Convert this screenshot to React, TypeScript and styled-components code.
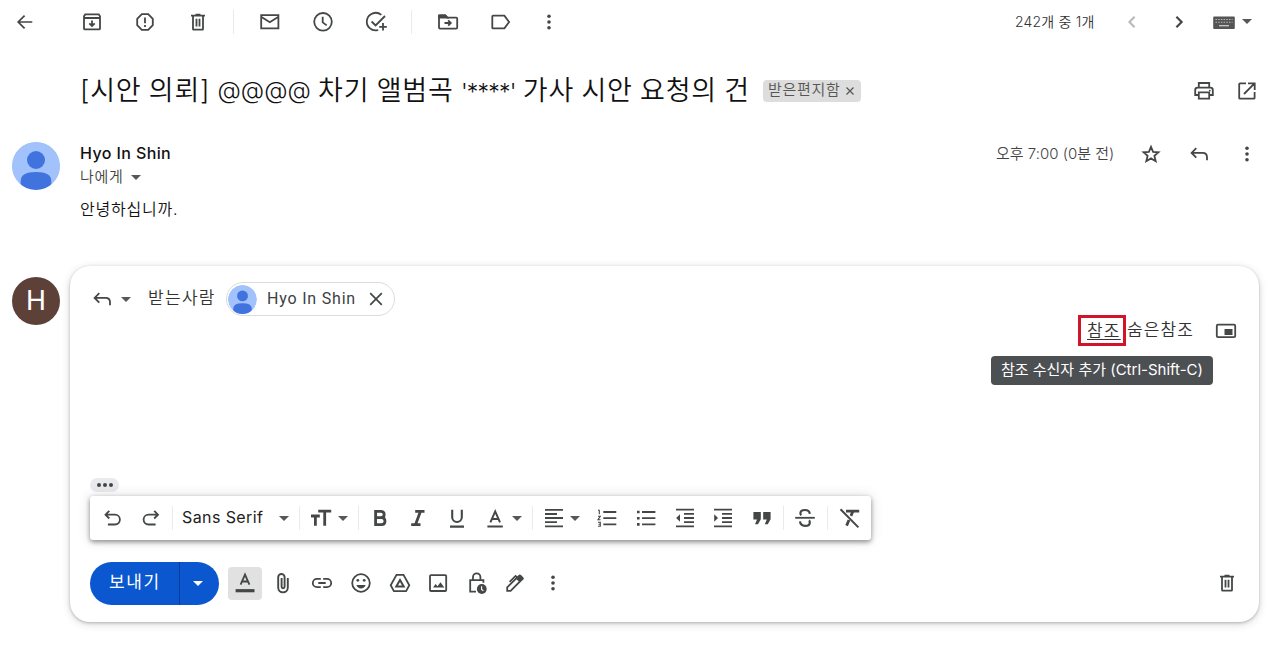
import React from "react";
import styled, { createGlobalStyle } from "styled-components";

const GlobalStyle = createGlobalStyle`
  * {
    box-sizing: border-box;
  }

  body {
    margin: 0;
    background: #fff;
    color: #202124;
    font-family: Inter, "Noto Sans CJK KR", sans-serif;
    overflow: hidden;
  }
`;

const icons = {
  back: <path d="M19.3 12H5.5M11.6 5.6 5.2 12l6.4 6.4" strokeWidth="1.7" />,
  archive: (
    <>
      <path d="M5.2 4.4h13.6L20 6.2v12.2q0 1-1 1H5q-1 0-1-1V6.2zM4 8h16" />
      <path d="M12 10.5v5M9.3 13.3l2.7 2.7 2.7-2.7" />
    </>
  ),
  report: (
    <>
      <path d="M8.8 4.2h6.4l4.6 4.6v6.4l-4.6 4.6H8.8l-4.6-4.6V8.8z" />
      <path d="M12 7.6v5.6M12 14.9v2" />
    </>
  ),
  trash: (
    <path d="M5 5.6h14M9.5 4.6h5M7 6v13.1q0 .6.6.6h8.8q.6 0 .6-.6V6M10.5 8.8v7.6M13.5 8.8v7.6" />
  ),
  mail: <path d="M3.2 5.2h17.2v13.2H3.2zM3.5 7.1l8.3 5.2 8.3-5.2" />,
  clock: (
    <>
      <circle cx="12" cy="11.8" r="8.8" />
      <path d="M11.7 6.8v5.6l4 3" />
    </>
  ),
  addTask: (
    <path d="M17.3 4.9A8.8 8.8 0 1 0 14.2 20M7.6 11.5l4 4L21 6M19 13v7.6M15.2 16.8h7.6" />
  ),
  moveTo: (
    <>
      <path d="M3 6.4q0-1 1-1h5.3l2 2.2h8.9q1 0 1 1v9q0 1-1 1H4q-1 0-1-1z" />
      <path
        d="M3 5.4h6.3l2 2.2H3z"
        fill="currentColor"
      />
      <path d="M8.5 13h6M12.2 10.4l2.6 2.6-2.6 2.6" />
    </>
  ),
  label: <path d="M4 5.6h11.4l4.7 6.4-4.7 6.4H4q-.7 0-.7-.7V6.3q0-.7.7-.7z" />,
  more: (
    <g fill="currentColor" stroke="none">
      <circle cx="12" cy="6.2" r="1.8" />
      <circle cx="12" cy="12" r="1.8" />
      <circle cx="12" cy="17.8" r="1.8" />
    </g>
  ),
  chevronLeft: <path d="m14.6 6.8-5.2 5.2 5.2 5.2" strokeWidth="2" />,
  chevronRight: <path d="m9.4 6.8 5.2 5.2-5.2 5.2" strokeWidth="2.2" />,
  keyboard: (
    <>
      <rect x="1.2" y="6.5" width="21.6" height="12.5" rx="1" fill="#555" stroke="none" />
      <path
        d="M3.5 9.5h17M3.5 12.3h17"
        stroke="#bbb"
        strokeWidth="1.1"
        strokeDasharray="1.5 1.2"
      />
      <path d="M7 15.7h10" stroke="#ccc" strokeWidth="1.3" />
    </>
  ),
  print: (
    <>
      <path d="M6.8 8V4h10.4v4M6.8 16H3.2v-5q0-2.4 2.4-2.4h12.8q2.4 0 2.4 2.4v5h-3.6" />
      <path d="M6.8 13.4h10.4v6.2H6.8z" />
      <circle cx="17.8" cy="11.6" r=".9" fill="currentColor" stroke="none" />
    </>
  ),
  popOut: <path d="M11 4.3H5q-.8 0-.8.8v13.8q0 .8.8.8h13.8q.8 0 .8-.8V13M13 4.3h6.7V11M19.3 4.7 9 15" />,
  star: (
    <path d="m12 4.8 2.1 5 5.4.5-4.1 3.6 1.3 5.3-4.7-2.8-4.7 2.8 1.3-5.3-4.1-3.6 5.4-.5z" />
  ),
  reply: <path d="M9.3 6.2 4.6 10.9l4.7 4.7M4.8 10.9h10.8q4.4 0 4.4 4.4v3" />,
  close: <path d="m6.2 6.2 11.6 11.6M17.8 6.2 6.2 17.8" strokeWidth="1.7" />,
  closeSmall: <path d="m5 5 14 14M19 5 5 19" strokeWidth="2.4" />,
  pip: (
    <>
      <rect x="2.8" y="5.7" width="18.4" height="12.4" rx="1.2" />
      <path d="M10.5 10h8v6h-8z" fill="currentColor" stroke="none" />
    </>
  ),
  undo: <path d="M8.3 4.8 4.5 8.7l3.8 3.8M4.8 8.7H14a4.9 4.9 0 0 1 0 9.8H6.9" />,
  redo: <path d="m15.2 4.8 3.8 3.9-3.8 3.8M18.7 8.7H9.5a4.9 4.9 0 0 0 0 9.8h7.1" />,
  textSize: <path d="M9.2 5.2h13M15.7 5v14.8M2 10h8.8M6.4 10v9.8" strokeWidth="2.8" />,
  bold: (
    <path
      d="M7.6 5.3h5.2q3.4 0 3.4 3.2 0 3.2-3.4 3.2H7.6zM7.6 11.7h5.7q3.7 0 3.7 3.5t-3.7 3.5H7.6z"
      strokeWidth="2.8"
    />
  ),
  italic: <path d="M9.2 5.4h9.3M5.2 18.6h9.3M14.4 5.4 9.6 18.6" strokeWidth="2.8" />,
  underline: <path d="M7.2 3.8v7.4a4.8 4.8 0 0 0 9.6 0V3.8M5 20.6h14" strokeWidth="2.1" />,
  textColor: <path d="m7.4 16.4 4.8-11 4.8 11M9 13h6.4M4.4 20.4h15.4" strokeWidth="2" />,
  formatting: (
    <>
      <path d="m7.6 13.6 4.4-10 4.4 10M9.1 10.5h5.8" />
      <path d="M2.6 19.7h18.9" strokeWidth="3.2" />
    </>
  ),
  align: <path d="M3 3.9h18M3 8h12M3 12h18M3 16.1h12M3 20.3h18" />,
  ordered: (
    <>
      <path d="M8.3 6h13M8.3 12.2h13M8.3 18.4h13" />
      <path
        d="M3 4.2h1.3v4M3 10.3h2.3L3 13.7h2.5M3 16.3h2.3v4H3M3.5 18.3h1.8"
        strokeWidth="1.1"
      />
    </>
  ),
  bullets: (
    <>
      <path d="M8 6h13.4M8 12.2h13.4M8 18.4h13.4" />
      <path d="M3 6h2.6M3 12.2h2.6M3 18.4h2.6" strokeWidth="2.6" />
    </>
  ),
  outdent: (
    <>
      <path d="M3 3.6h18M11 7.8h10M11 12h10M11 16.2h10M3 20.4h18" />
      <path d="M7 8.2v7.6L3.2 12z" fill="currentColor" stroke="none" />
    </>
  ),
  indent: (
    <>
      <path d="M3 3.6h18M11 7.8h10M11 12h10M11 16.2h10M3 20.4h18" />
      <path d="M3.2 8.2v7.6L7 12z" fill="currentColor" stroke="none" />
    </>
  ),
  quote: (
    <path
      d="M3.4 6h7.4v7.2l-2.8 5H5l2-4.6H3.4zM13.2 6h7.4v7.2l-2.8 5h-3l2-4.6h-3.6z"
      fill="currentColor"
      stroke="none"
    />
  ),
  strike: (
    <>
      <path d="M16.8 7.8q-.4-3.8-4.8-3.8-4.6 0-4.6 3.2 0 1.2.9 2M7 15.4q.4 4.4 5.2 4.4 4.6 0 4.6-3.4 0-1.3-.8-2" strokeWidth="2.2" />
      <path d="M2.2 11.8h19.6" />
    </>
  ),
  clear: (
    <>
      <path d="M8 5.2h13.2M15 5.2l-2.1 4.7M11 14l-2.4 5.6" strokeWidth="2.8" />
      <path d="m2.5 3.2 17.9 18.2" strokeWidth="2" />
    </>
  ),
  attach: (
    <path
      d="M16.8 7v9.6a4.8 4.8 0 0 1-9.6 0V6.2a3.2 3.2 0 0 1 6.4 0v9.6a1.5 1.5 0 0 1-3 0V7"
      strokeWidth="1.9"
    />
  ),
  link: <path d="M10.8 7.8H7a4.2 4.2 0 0 0 0 8.4h3.8M13.2 7.8H17a4.2 4.2 0 0 1 0 8.4h-3.8M8.3 12h7.4" />,
  emoji: (
    <>
      <circle cx="12" cy="12" r="8.8" />
      <path d="M7.4 14h9.2q-1.2 3.4-4.6 3.4T7.4 14z" fill="currentColor" stroke="none" />
      <circle cx="8.8" cy="9.3" r="1.4" fill="currentColor" stroke="none" />
      <circle cx="15.2" cy="9.3" r="1.4" fill="currentColor" stroke="none" />
    </>
  ),
  drive: (
    <>
      <path d="M8.5 3.9h7l5.8 10.4-3.2 5.8H5.9l-3.2-5.8z" />
      <path d="m12 9 3.7 6.6H8.3z" strokeWidth="2" />
    </>
  ),
  image: (
    <>
      <rect x="4" y="4.2" width="16.2" height="15.8" rx="1" />
      <path d="m7 16.6 2.6-3.6 1.9 2.2 3-3.9 3.8 5.3z" fill="currentColor" stroke="none" />
    </>
  ),
  confidential: (
    <>
      <path d="M11 20.6H5.2V9.2h13.2v2.6M8 9.2V6a3.7 3.7 0 0 1 7.4 0v3.2" />
      <circle cx="16.8" cy="18" r="4.9" fill="currentColor" stroke="none" />
      <path d="M16.6 15.2v3.2l1.8 1.4" stroke="#fff" strokeWidth="1.1" />
    </>
  ),
  signature: (
    <>
      <path d="M4.2 19.8v-3.4L13.6 7l3.4 3.4-9.4 9.4z" />
      <path
        d="m13 6.4 3-2.6q1-.8 2 .2l2.4 2.4q1 1 0 2L17.6 11z"
        fill="currentColor"
        stroke="none"
      />
      <path d="m6.6 10.9 6-6 1.6 1.4" strokeWidth="1.7" />
    </>
  )
};

type IconName = keyof typeof icons;

const StyledIcon = styled.svg<{ $gap?: number; $size?: number; $color?: string }>`
  display: block;
  flex: none;
  width: ${props => props.$size || 24}px;
  height: ${props => props.$size || 24}px;
  margin-left: ${props => props.$gap || 0}px;
  color: ${props => props.$color || "#444746"};
`;

const Icon = ({
  name,
  gap,
  size,
  color
}: {
  name: IconName;
  gap?: number;
  size?: number;
  color?: string;
}) => (
  <StyledIcon
    $gap={gap}
    $size={size}
    $color={color}
    viewBox="0 0 24 24"
    fill="none"
    stroke="currentColor"
    strokeWidth="1.8"
  >
    {icons[name]}
  </StyledIcon>
);

const Caret = styled.span<{ $gap?: number; $color?: string }>`
  flex: none;
  margin-left: ${props => props.$gap || 0}px;
  border: 5px solid transparent;
  border-top-color: ${props => props.$color || "#555857"};
  border-bottom: 0;
`;

const Divider = styled.span<{ $gap?: number }>`
  flex: none;
  width: 1px;
  height: 24px;
  margin-left: ${props => props.$gap || 0}px;
  background: #e8eaed;
`;

const Page = styled.div`
  width: 1280px;
  height: 650px;
`;

const TopBar = styled.header`
  display: flex;
  align-items: center;
  height: 43px;
  padding-left: 13px;
`;

const Counter = styled.span`
  width: 81px;
  margin-left: auto;
  padding-bottom: 2px;
  font-size: 14px;
  font-weight: 350;
  letter-spacing: 0.2px;
  white-space: nowrap;
  color: #333;
`;

const Pager = styled.div`
  display: flex;
  align-items: center;
  width: 184px;
`;

const SubjectRow = styled.div`
  display: flex;
  align-items: center;
  height: 96px;
  padding-left: 80px;
`;

const Subject = styled.h1`
  width: 683px;
  margin: 0;
  font-size: 27px;
  font-weight: 350;
  line-height: 40px;
  letter-spacing: 0.8px;
  word-spacing: -1.1px;
  white-space: nowrap;
  color: #111;
`;

const Latin = styled.span<{ $size: number; $spacing?: number; $raise?: number }>`
  font-family: Inter, sans-serif;
  font-size: ${props => props.$size}px;
  letter-spacing: ${props => props.$spacing || 0}px;
  line-height: 1;
  vertical-align: ${props => props.$raise || 0}px;
`;

const LabelChip = styled.span`
  display: flex;
  align-items: center;
  width: 98px;
  height: 22px;
  padding-left: 5px;
  border-radius: 4px;
  background: #ddd;
  color: #555;
  font-size: 15px;
  font-weight: 350;
  line-height: 18px;
  letter-spacing: 0.7px;
  white-space: nowrap;
`;

const LabelName = styled.span`
  width: 76px;
  padding-bottom: 3px;
`;

const SubjectActions = styled.div`
  display: flex;
  margin-left: auto;
  padding-right: 21px;
`;

const Message = styled.article`
  display: flex;
  height: 127px;
  padding-left: 12px;
`;

const Avatar = styled.div<{ $background?: string }>`
  display: flex;
  flex: none;
  align-items: center;
  justify-content: center;
  width: 48px;
  height: 48px;
  margin-top: 3px;
  overflow: hidden;
  border-radius: 50%;
  background: ${props => props.$background || "#a1c2fa"};
  color: #fff;
  font-family: Roboto, sans-serif;
  font-size: 28px;
  font-weight: 400;
`;

const MessageContent = styled.div`
  flex: 1;
  padding-left: 20px;
`;

const Sender = styled.div`
  height: 27px;
  font-size: 16px;
  font-weight: 500;
  line-height: 29px;
  letter-spacing: 0.4px;
  color: #111;
`;

const Recipient = styled.div`
  display: flex;
  align-items: center;
  height: 22px;
  font-size: 15px;
  font-weight: 350;
  line-height: 20px;
  letter-spacing: 0.7px;
  color: #444;
`;

const Body = styled.p`
  margin: 9px 0 0;
  font-size: 16px;
  font-weight: 350;
  line-height: 24px;
  letter-spacing: 0.8px;
  color: #111;
`;

const MessageMeta = styled.div`
  display: flex;
  align-items: center;
  height: 24px;
  margin-top: 3px;
  padding-right: 21px;
`;

const Time = styled.span`
  width: 143px;
  padding-bottom: 3px;
  font-size: 15px;
  font-weight: 350;
  white-space: nowrap;
  color: #444;
`;

const ComposeRow = styled.div`
  display: flex;
  gap: 10px;
  padding-left: 12px;
`;

const ComposeAvatar = styled.div`
  padding-top: 7.5px;
`;

const ComposeCard = styled.section`
  display: flex;
  flex-direction: column;
  width: 1189px;
  height: 356px;
  padding: 16px 20px 17px;
  border-radius: 20px;
  background: #fff;
  box-shadow: 0 1px 3px rgba(60, 64, 67, 0.3), 0 2px 9px rgba(60, 64, 67, 0.2);
`;

const Recipients = styled.div`
  display: flex;
  align-items: center;
  height: 34px;
`;

const FieldLabel = styled.span`
  width: 78px;
  margin-left: 17px;
  padding-bottom: 3px;
  font-size: 17px;
  font-weight: 350;
  line-height: 24px;
  letter-spacing: 1.3px;
  white-space: nowrap;
  color: #333;
`;

const PersonChip = styled.div`
  display: flex;
  align-items: center;
  width: 169px;
  height: 34px;
  padding-left: 1px;
  border: 1px solid #dadce0;
  border-radius: 17px;
`;

const ChipName = styled.span`
  width: 100px;
  margin-left: 10px;
  padding-bottom: 1px;
  font-family: Roboto, sans-serif;
  font-size: 16px;
  letter-spacing: 0.8px;
  white-space: nowrap;
  color: #3c4043;
`;

const CopyRow = styled.div`
  display: flex;
  align-items: center;
  justify-content: flex-end;
  height: 29px;
  padding-right: 1px;
`;

const CopyButton = styled.span`
  position: relative;
  display: flex;
  align-items: center;
  width: 48px;
  height: 31px;
  padding-left: 6px;
  border: 3px solid #d0152b;
  font-size: 17px;
  font-weight: 350;
  letter-spacing: 1.2px;
  color: #333;

  u {
    padding-bottom: 2px;
    text-decoration-thickness: 1px;
    text-underline-offset: 2px;
    white-space: nowrap;
  }
`;

const Tooltip = styled.span`
  position: absolute;
  top: 38px;
  left: -90px;
  width: 222px;
  height: 29px;
  border-radius: 4px;
  background: #4d5053;
  color: #fff;
  font-size: 15px;
  font-weight: 400;
  line-height: 27px;
  letter-spacing: 0;
  text-align: center;
  white-space: nowrap;
`;

const BlindCopy = styled.span`
  width: 88px;
  padding: 0 0 1px 1px;
  font-size: 17px;
  font-weight: 350;
  line-height: 24px;
  letter-spacing: 1.1px;
  white-space: nowrap;
  color: #333;
`;

const Trimmed = styled.div`
  display: flex;
  align-items: center;
  justify-content: center;
  gap: 2px;
  width: 29px;
  height: 14px;
  margin: auto 0 4px;
  border-radius: 7px;
  background: #e8eaed;

  i {
    width: 4px;
    height: 4px;
    border-radius: 50%;
    background: #444746;
  }
`;

const FormatBar = styled.div`
  display: flex;
  flex: none;
  align-items: center;
  width: 781px;
  height: 44px;
  border-radius: 3px;
  background: #fff;
  box-shadow: 0 2px 5px rgba(0, 0, 0, 0.42), 0 0 14px rgba(0, 0, 0, 0.12);
`;

const FontName = styled.span`
  width: 87px;
  margin-left: 9px;
  padding-bottom: 2px;
  font-size: 16px;
  letter-spacing: 0.4px;
  white-space: nowrap;
  color: #222;
`;

const SendRow = styled.div`
  display: flex;
  flex: none;
  align-items: center;
  height: 43px;
  margin-top: 22px;
`;

const SendButton = styled.div`
  display: flex;
  width: 129px;
  height: 43px;
  overflow: hidden;
  border-radius: 22px;
  background: #0b57d0;
  color: #fff;
`;

const SendLabel = styled.span`
  width: 90px;
  padding-left: 19px;
  border-right: 1px solid #073c96;
  font-size: 17px;
  line-height: 40px;
  letter-spacing: 1.6px;
  white-space: nowrap;
`;

const SendMenu = styled.span`
  display: flex;
  flex: 1;
  align-items: center;
  padding-left: 13px;
`;

const Tools = styled.div`
  display: flex;
  flex: 1;
  align-items: center;
  padding: 0 0 1px 9px;
`;

const ActiveTool = styled.span`
  display: flex;
  align-items: center;
  justify-content: center;
  width: 34px;
  height: 33px;
  border-radius: 4px;
  background: #e1e1e1;
`;

const DiscardSlot = styled.span`
  margin-left: auto;
`;

const StyledPortrait = styled.svg`
  display: block;
  flex: none;
  border-radius: 50%;
`;

const Portrait = ({ size }: { size: number }) => (
  <StyledPortrait width={size} height={size} viewBox="0 0 48 48">
    <circle cx="24" cy="24" r="24" fill="#a1c2fa" />
    <g fill="#4173df">
      <circle cx="24" cy="18" r="9" />
      <path d="M8.7 48V39q0-9 15.3-9t15.3 9v9z" />
    </g>
  </StyledPortrait>
);

const App = () => (
  <>
    <GlobalStyle />
    <Page>
      <TopBar>
        <Icon name="back" />
        <Icon name="archive" gap={43} />
        <Icon name="report" gap={29} />
        <Icon name="trash" gap={29} />
        <Divider $gap={23} />
        <Icon name="mail" gap={24} />
        <Icon name="clock" gap={29} />
        <Icon name="addTask" gap={29} />
        <Divider $gap={23} />
        <Icon name="moveTo" gap={24} />
        <Icon name="label" gap={29} />
        <Icon name="more" gap={24} />
        <Counter>242개 중 1개</Counter>
        <Pager>
          <Icon name="chevronLeft" gap={24} color="#b8b8b8" />
          <Icon name="chevronRight" gap={23} />
          <Icon name="keyboard" gap={21} />
          <Caret $gap={6} />
        </Pager>
      </TopBar>

      <SubjectRow>
        <Subject>
          [시안 의뢰]{" "}
          <Latin $size={24} $raise={1}>
            @@@@
          </Latin>{" "}
          차기 앨범곡{" "}
          <Latin $size={23} $spacing={-0.8}>
            '****'
          </Latin>{" "}
          가사 시안 요청의 건
        </Subject>
        <LabelChip>
          <LabelName>받은편지함</LabelName>
          <Icon name="closeSmall" size={12} color="#555" />
        </LabelChip>
        <SubjectActions>
          <Icon name="print" />
          <Icon name="popOut" gap={19} />
        </SubjectActions>
      </SubjectRow>

      <Message>
        <Avatar>
          <Portrait size={48} />
        </Avatar>
        <MessageContent>
          <Sender>Hyo In Shin</Sender>
          <Recipient>
            나에게
            <Caret $gap={7} />
          </Recipient>
          <Body>안녕하십니까.</Body>
        </MessageContent>
        <MessageMeta>
          <Time>오후 7:00 (0분 전)</Time>
          <Icon name="star" />
          <Icon name="reply" gap={24} />
          <Icon name="more" gap={24} />
        </MessageMeta>
      </Message>

      <ComposeRow>
        <ComposeAvatar>
          <Avatar $background="#5d4037">H</Avatar>
        </ComposeAvatar>
        <ComposeCard>
          <Recipients>
            <Icon name="reply" />
            <Caret $gap={7} />
            <FieldLabel>받는사람</FieldLabel>
            <PersonChip>
              <Portrait size={29} />
              <ChipName>Hyo In Shin</ChipName>
              <Icon name="close" gap={-3} />
            </PersonChip>
          </Recipients>
          <CopyRow>
            <CopyButton>
              <u>참조</u>
              <Tooltip>참조 수신자 추가 (Ctrl-Shift-C)</Tooltip>
            </CopyButton>
            <BlindCopy>숨은참조</BlindCopy>
            <Icon name="pip" />
          </CopyRow>

          <Trimmed>
            <i />
            <i />
            <i />
          </Trimmed>
          <FormatBar>
            <Icon name="undo" gap={10.5} />
            <Icon name="redo" gap={14} />
            <Divider $gap={9.5} />
            <FontName>Sans Serif</FontName>
            <Caret $gap={10} />
            <Divider $gap={10} />
            <Icon name="textSize" gap={9} />
            <Caret $gap={5} />
            <Divider $gap={10} />
            <Icon name="bold" gap={9} />
            <Icon name="italic" gap={14} />
            <Icon name="underline" gap={15} />
            <Icon name="textColor" gap={14} />
            <Caret $gap={5} />
            <Divider $gap={10} />
            <Icon name="align" gap={9} />
            <Caret $gap={4} />
            <Icon name="ordered" gap={15} />
            <Icon name="bullets" gap={15} />
            <Icon name="outdent" gap={14.5} />
            <Icon name="indent" gap={14.5} />
            <Icon name="quote" gap={14.5} />
            <Divider $gap={9.5} />
            <Icon name="strike" gap={9} />
            <Divider $gap={10} />
            <Icon name="clear" gap={10} />
          </FormatBar>

          <SendRow>
            <SendButton>
              <SendLabel>보내기</SendLabel>
              <SendMenu>
                <Caret $color="#fff" />
              </SendMenu>
            </SendButton>
            <Tools>
              <ActiveTool>
                <Icon name="formatting" />
              </ActiveTool>
              <Icon name="attach" gap={9} />
              <Icon name="link" gap={15} />
              <Icon name="emoji" gap={14.5} />
              <Icon name="drive" gap={15} />
              <Icon name="image" gap={14} />
              <Icon name="confidential" gap={15} />
              <Icon name="signature" gap={14} />
              <Icon name="more" gap={14} />
              <DiscardSlot>
                <Icon name="trash" />
              </DiscardSlot>
            </Tools>
          </SendRow>
        </ComposeCard>
      </ComposeRow>
    </Page>
  </>
);

export default App;
